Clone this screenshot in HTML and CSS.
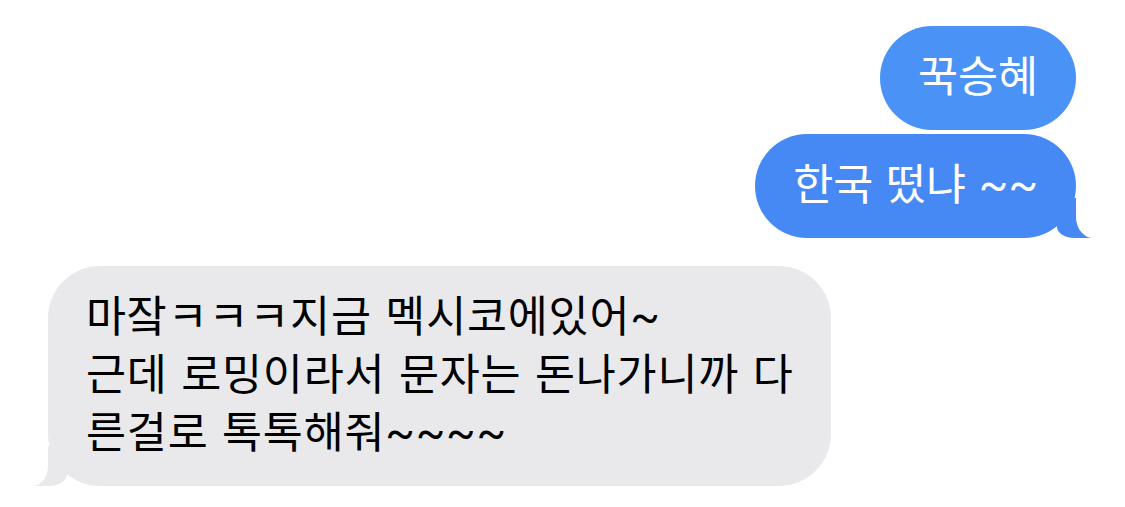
FILE: index.html
```html
<!DOCTYPE html>
<html lang="ko">
<head>
    <meta charset="UTF-8">
    <meta name="viewport" content="width=device-width, initial-scale=1.0">
    <title>Messages</title>
    <link rel="stylesheet" href="styles.css">
</head>
<body>
    <div id="thread">
        <div class="bubble sent first">꾹승혜</div>
        <div class="bubble sent last">한국 떴냐 ~~</div>
        <div class="bubble received last">마잨ㅋㅋㅋ지금 멕시코에있어~<br>근데 로밍이라서 문자는 돈나가니까 다<br>른걸로 톡톡해줘~~~~</div>
    </div>
</body>
</html>
```

FILE: styles.css
```css
body, html {
    margin: 0;
    background-color: white;
}

#thread {
    display: flex;
    flex-direction: column;
    padding: 26px 49px 0 48px;
    font-family: Roboto, "Noto Sans CJK KR", sans-serif;
}

.bubble {
    position: relative;
    padding: 23px 38px;
    font-size: 43.5px;
    line-height: 58px;
    word-spacing: 2px;
    border-radius: 52px;
    white-space: nowrap;
}

.sent {
    align-self: flex-end;
    color: white;
    background-color: #4a92f6;
}

.sent.first {
    margin-bottom: 4px;
}

.sent.last {
    background-color: #4689f4;
    margin-bottom: 28px;
}

.received {
    align-self: flex-start;
    color: black;
    background-color: #e9e9eb;
    letter-spacing: 0.8px;
}

/* tails */
.last::before,
.last::after {
    content: "";
    position: absolute;
    bottom: 0;
    height: 40px;
}

.sent.last::before {
    right: -17px;
    width: 36px;
    background-color: #4689f4;
    border-bottom-left-radius: 18px 11px;
    z-index: 0;
}

.sent.last::after {
    right: -40px;
    width: 40px;
    background-color: white;
    border-bottom-left-radius: 17px 21px;
    z-index: 1;
}

.received.last::before {
    left: -16px;
    width: 35px;
    background-color: #e9e9eb;
    border-bottom-right-radius: 18px 12px;
    z-index: 0;
}

.received.last::after {
    left: -40px;
    width: 40px;
    background-color: white;
    border-bottom-right-radius: 16px 20px;
    z-index: 1;
}
```
